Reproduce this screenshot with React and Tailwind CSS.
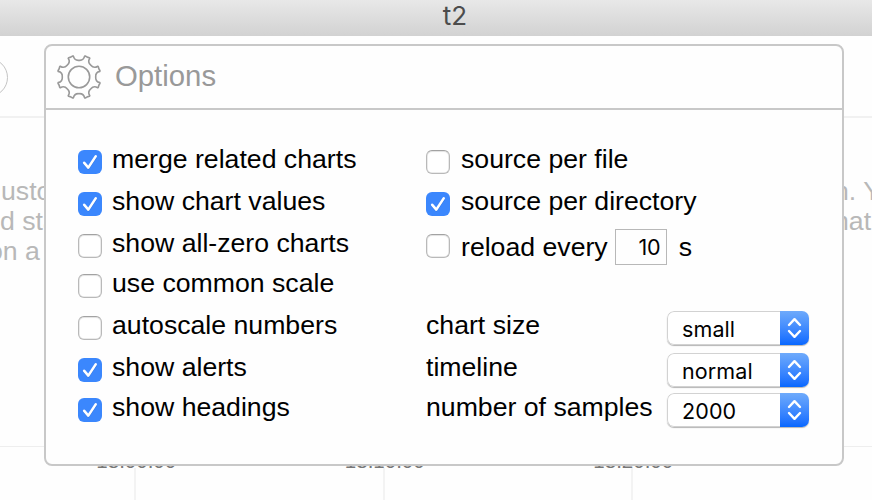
import React from 'react';

const leftOptions = [
  { label: 'merge related charts', on: true, row: 'h-[42px]' },
  { label: 'show chart values', on: true, row: 'h-[42px]' },
  { label: 'show all-zero charts', on: false, row: 'h-[40px]' },
  { label: 'use common scale', on: false, row: 'h-[42px]' },
  { label: 'autoscale numbers', on: false, row: 'h-[42px]' },
  { label: 'show alerts', on: true, row: 'h-[40px]' },
  { label: 'show headings', on: true, row: 'h-[40px]' },
];

const selects = [
  { label: 'chart size', value: 'small', row: 'h-[42px]' },
  { label: 'timeline', value: 'normal', row: 'h-[40px]' },
  { label: 'number of samples', value: '2000', row: 'h-[40px]' },
];

const labelText = 'whitespace-pre text-[26.67px] leading-[24px] -mt-[3px]';

function Checkbox({ on }) {
  if (!on) {
    return (
      <span className="block size-6 shrink-0 rounded-[6px] border-[1.5px] border-[#b9b9b9] border-t-[#a2a2a2] bg-white shadow-[inset_0_1px_1px_#e4e4e4,inset_0_0_0_0.5px_#d8d8d8]" />
    );
  }
  return (
    <span className="block size-6 shrink-0 rounded-[6px] bg-[#3b87fd]">
      <svg viewBox="0 0 24 24" className="size-6" fill="none" strokeLinecap="round" strokeLinejoin="round">
        <path d="M6.2 13.5 L10.3 18.2 L17.7 7.3" stroke="#2c6fd6" strokeWidth="2.4" />
        <path d="M6.2 12.8 L10.3 17.6 L17.7 6.4" stroke="#fff" strokeWidth="2.6" />
      </svg>
    </span>
  );
}

function Option({ label, on, row, gap = 'gap-[10px]' }) {
  return (
    <div className={`flex items-start ${gap} ${row}`}>
      <Checkbox on={on} />
      <span className={labelText}>{label}</span>
    </div>
  );
}

function Select({ value }) {
  return (
    <div className="-mt-[5px] flex h-[34px] w-[142px] shrink-0 overflow-hidden rounded-[7px] bg-white shadow-[0_1px_1px_#b5b5b5]">
      <div className="flex flex-1 items-center rounded-l-[7px] border border-r-0 border-[#d2d2d2] pl-[14px] pt-[1px] font-['Inter'] text-[21.5px] leading-[22px] tracking-[0.1px]">
        {value}
      </div>
      <div className="w-[29px] bg-gradient-to-b from-[#6eaafb] to-[#0567ff]">
        <svg viewBox="0 0 29 34" className="h-[34px] w-[29px]" fill="none" stroke="#fff" strokeWidth="2.4" strokeLinecap="round" strokeLinejoin="round">
          <path d="M9 14 L14.5 8.2 L20 14 M9 20 L14.5 25.8 L20 20" />
        </svg>
      </div>
    </div>
  );
}

function Gear() {
  const pts = [];
  const c = 22;
  for (let i = 0; i < 8; i++) {
    const a = (i * Math.PI) / 4 + Math.PI / 8;
    const p = (r, t) => `${(c + r * Math.cos(t)).toFixed(2)} ${(c + r * Math.sin(t)).toFixed(2)}`;
    pts.push(
      `${i ? 'L' : 'M'}${p(21.6, a - 0.13)} L${p(21.9, a - 0.1)} L${p(21.5, a)} L${p(21.9, a + 0.1)} L${p(21.6, a + 0.13)} C${p(18.3, a + 0.12)} ${p(16.7, a + 0.22)} ${p(16.7, a + 0.393)} C${p(16.7, a + 0.565)} ${p(18.3, a + 0.665)} ${p(21.6, a + 0.655)}`
    );
  }
  return (
    <svg viewBox="0 0 44 44" className="size-11 shrink-0 overflow-visible" fill="none" stroke="#999" strokeWidth="1.6" strokeLinejoin="round">
      <path d={`${pts.join(' ')} Z`} />
      <circle cx="22" cy="22" r="10.7" />
    </svg>
  );
}

function Backdrop() {
  return (
    <div className="flex h-[464px] flex-col text-[26.67px] leading-[30px] text-[#b8b8b8]">
      <div className="flex h-[82px] shrink-0 items-start border-b-2 border-[#f1f1f1] pt-[22px]">
        <div className="-ml-[31px] size-[39px] rounded-full border-[1.5px] border-[#c4c4c4]" />
      </div>
      <div className="flex h-[329px] shrink-0 justify-between border-b border-[#eeeeee] pt-[58px]">
        <div className="w-[44px] whitespace-nowrap">
          <div className="ml-[1px]">usto</div>
          <div>d sta</div>
          <div className="-ml-[12px]">on a</div>
        </div>
        <div className="w-[37px] whitespace-nowrap">
          <div className="ml-[-1px]">n. Y</div>
          <div className="ml-[-1px]">hat</div>
        </div>
      </div>
      <div className="ml-[11px] flex h-[53px] shrink-0 text-[20.5px] leading-[24px] text-[#777]">
        {['18:00:00', '18:10:00', '18:20:00'].map((t) => (
          <div key={t} className="flex w-[248.5px] shrink-0 flex-col items-center">
            <span className="ml-[2px] mt-[2px] h-[19px]">{t}</span>
            <span className="h-[32px] w-[2px] bg-[#f3f3f3]" />
          </div>
        ))}
      </div>
    </div>
  );
}

export default function App() {
  return (
    <div className="relative h-[500px] w-[872px] overflow-hidden bg-[#fefefe] font-['Liberation_Sans',Arial,sans-serif] text-black">
      <div className="flex h-9 items-center justify-center bg-gradient-to-b from-[#e8e8e8] to-[#d2d2d2] pb-[4px] pl-[38px] font-['Inter'] text-[26px] leading-none text-[#4c4c4c]">
        t2
      </div>
      <Backdrop />
      <div className="absolute left-[44px] top-[44px] flex h-[422px] w-[800px] flex-col rounded-[8px] border-2 border-[#c8c8c8] bg-[#fefefe]">
        <div className="flex h-[64px] shrink-0 items-center gap-[14px] border-b-2 border-[#c8c8c8] pl-[11px] text-[#999]">
          <Gear />
          <span className="-mt-[2px] text-[29.33px] leading-none">Options</span>
        </div>
        <div className="flex pl-[32px] pt-[40px]">
          <div className="w-[348px] shrink-0">
            {leftOptions.map((o) => (
              <Option key={o.label} {...o} />
            ))}
          </div>
          <div className="w-[383px]">
            <Option label="source per file" row="h-[42px]" gap="gap-[11px]" />
            <Option label="source per directory" on row="h-[42px]" gap="gap-[11px]" />
            <div className="flex h-[82px] items-start">
              <Checkbox />
              <span className="ml-[11px] mt-[1px] text-[26.67px] leading-[24px]">reload every</span>
              <div className="-mt-[5px] ml-[7px] flex h-[36px] w-[52px] items-center justify-end border border-[#b8b8b8] pr-[5px] pt-[2px] font-['Inter'] text-[21.5px] leading-none">
                10
              </div>
              <span className="ml-[12px] mt-[1px] text-[26.67px] leading-[24px]">s</span>
            </div>
            {selects.map((s) => (
              <div key={s.label} className={`flex items-start justify-between ${s.row}`}>
                <span className={labelText}>{s.label}</span>
                <Select value={s.value} />
              </div>
            ))}
          </div>
        </div>
      </div>
    </div>
  );
}
